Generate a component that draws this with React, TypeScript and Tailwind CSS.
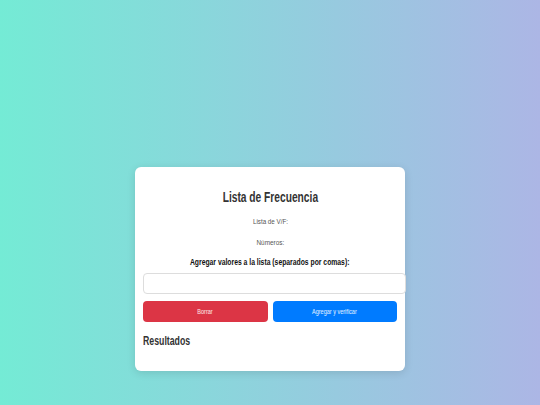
// Texto del original es más estrecho que Arial: se comprime con scale-x.
export default function App() {
  return (
    <div className="min-h-screen bg-linear-to-r/srgb from-[#74ebd5] to-[#acb6e5] pt-[167px] font-['Liberation_Sans',Arial,sans-serif]">
      <div className="mx-auto w-[270px] rounded-md bg-white px-2 pt-5 pb-[22px] shadow-[0_2px_8px_rgba(0,0,0,0.12)]">
        <h2 className="text-center text-[14px] leading-[20px] font-bold text-[#333]">
          <span className="inline-block scale-x-[0.73]">Lista de Frecuencia</span>
        </h2>
        <p className="mt-[10px] text-center text-[8px] leading-[10px] text-[#555]">
          <span className="inline-block scale-x-[0.78]">Lista de V/F:</span>
        </p>
        <p className="mt-[11px] text-center text-[8px] leading-[10px] text-[#555]">
          <span className="inline-block scale-x-[0.8]">Números:</span>
        </p>
        <label className="mt-[9px] block text-center text-[8.5px] leading-[10px] font-bold text-[#111]">
          <span className="inline-block scale-x-[0.8]">Agregar valores a la lista (separados por comas):</span>
        </label>
        <input
          type="text"
          className="mt-[6px] block h-[21px] w-[263px] rounded border border-[#ddd] bg-white px-2 text-[8px] outline-none"
        />
        <div className="mt-[7px] grid grid-cols-2 gap-[5px]">
          <button className="h-[21px] rounded bg-[#dc3545] text-[6.5px] text-white/90">
            <span className="inline-block scale-x-[0.85]">Borrar</span>
          </button>
          <button className="h-[21px] rounded bg-[#007bff] text-[6.5px] text-white/90">
            <span className="inline-block scale-x-[0.85]">Agregar y verificar</span>
          </button>
        </div>
        <h3 className="mt-[11px] text-[12.5px] leading-[16px] font-bold text-[#333]">
          <span className="inline-block origin-left scale-x-[0.7]">Resultados</span>
        </h3>
      </div>
    </div>
  );
}
